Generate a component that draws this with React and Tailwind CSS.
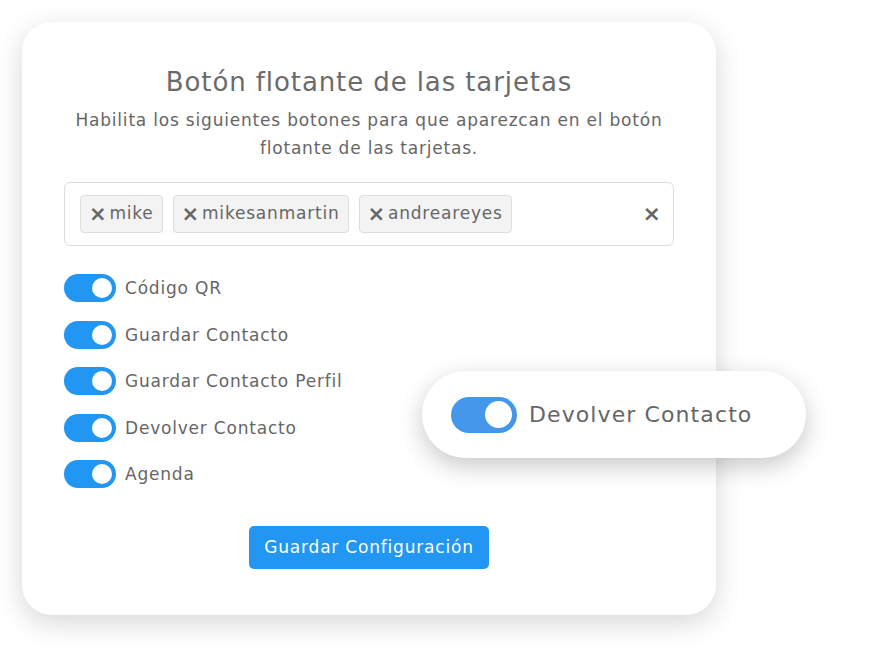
import React, { useState } from 'react';

const options = ['Código QR', 'Guardar Contacto', 'Guardar Contacto Perfil', 'Devolver Contacto', 'Agenda'];
const initialTags = ['mike', 'mikesanmartin', 'andreareyes'];

const Toggle = ({ on, onClick }) => (
  <button
    onClick={onClick}
    className={`flex h-[28px] w-[52px] shrink-0 items-center rounded-full px-[4px] ${on ? 'justify-end bg-[#2196f3]' : 'justify-start bg-[#cccccc]'}`}
  >
    <span className="h-[20px] w-[20px] rounded-full bg-white" />
  </button>
);

export default function App() {
  const [enabled, setEnabled] = useState(options.map(() => true));
  const [tags, setTags] = useState(initialTags);

  const flip = (i) => setEnabled(enabled.map((v, j) => (j === i ? !v : v)));

  return (
    <div className="relative h-[654px] w-[870px] bg-white font-['DejaVu_Sans',sans-serif] text-[#666666]">
      <div className="absolute left-[22px] top-[22px] flex h-[593px] w-[694px] flex-col rounded-[30px] bg-white px-[42px] pt-[40px] shadow-[0_8px_28px_rgba(0,0,0,0.16)]">
        <h1 className="text-center text-[26px] font-medium leading-[40px] tracking-[0.9px] text-[#6b6b6b]">
          Botón flotante de las tarjetas
        </h1>
        <p className="mt-[4px] text-center text-[17px] leading-[28px] tracking-[0.8px]">
          Habilita los siguientes botones para que aparezcan en el botón
          <br />
          flotante de las tarjetas.
        </p>

        {/* tag input */}
        <div className="mt-[20px] flex h-[64px] items-center gap-[10px] rounded-[6px] border border-[#dddddd] pl-[15px] pr-[12px]">
          {tags.map((t) => (
            <span
              key={t}
              className="flex h-[38px] items-center gap-[2px] rounded-[4px] border border-[#dddddd] bg-[#f3f3f3] px-[8px] text-[17px] tracking-[0.8px]"
            >
              <button
                onClick={() => setTags(tags.filter((x) => x !== t))}
                className="text-[21px] font-semibold leading-none"
              >
                ×
              </button>
              {t}
            </span>
          ))}
          <button onClick={() => setTags([])} className="ml-auto text-[22px] font-semibold leading-none text-[#666666]">
            ×
          </button>
        </div>

        {/* toggles */}
        <div className="mt-[28px] flex flex-col gap-[18.5px]">
          {options.map((o, i) => (
            <div key={o} className="flex items-center gap-[9px]">
              <Toggle on={enabled[i]} onClick={() => flip(i)} />
              <span className="text-[17px] leading-[28px] tracking-[0.8px]">{o}</span>
            </div>
          ))}
        </div>

        <div className="mt-[38px] flex justify-center">
          <button className="h-[43px] rounded-[5px] bg-[#2196f3] px-[15px] text-[17px] tracking-[0.8px] text-white">
            Guardar Configuración
          </button>
        </div>
      </div>

      {/* floating highlight */}
      <div className="absolute left-[422px] top-[371px] flex h-[87px] w-[384px] items-center gap-[12px] rounded-full bg-white pl-[29px] shadow-[0_8px_24px_rgba(0,0,0,0.22)]">
        <div className="flex h-[36px] w-[66px] items-center justify-end rounded-full bg-[#4597ec] px-[5px]">
          <span className="h-[27px] w-[27px] rounded-full bg-white" />
        </div>
        <span className="text-[22px] tracking-[1.1px] text-[#666666]">Devolver Contacto</span>
      </div>
    </div>
  );
}
